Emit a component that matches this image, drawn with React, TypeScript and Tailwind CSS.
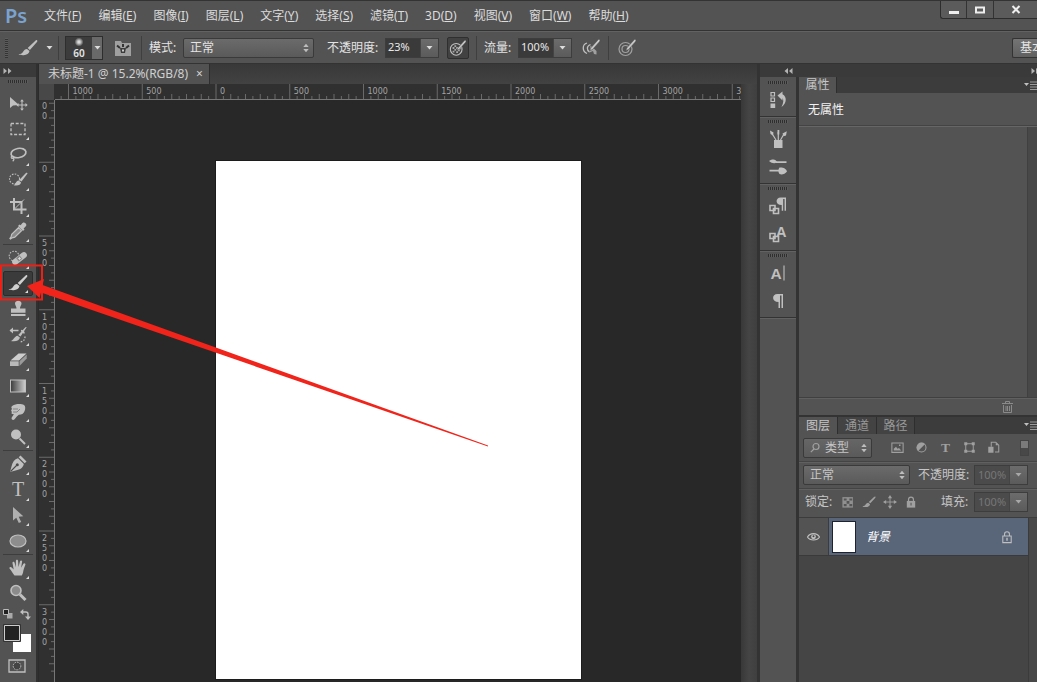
import React from "react";

type Glyph = { label: string; art: React.ReactNode; more?: boolean; active?: boolean };

const C = "#c0c0c0";
const D = "#a0a0a0";

function Svg({ children, size = 20 }: { children: React.ReactNode; size?: number }) {
  return (
    <svg width={size} height={size} viewBox="0 0 20 20" fill="none" aria-hidden="true" className="block shrink-0">
      {children}
    </svg>
  );
}

const brushPath = (color: string) => (
  <>
    <path d="M19 2.200c.8.7.3 1.500-.5 2.400l-6.600 7.300-2.200-1.800 7.400-7.200c.7-.6 1.400-1.100 1.900-.7z" fill={color} />
    <path d="M9 11l2.500 2.100c-.4 2.700-2.800 4-5.800 4.100-2 .1-4-.2-5.200-.9 2.700-.3 3.700-1.200 4.600-2.600.9-1.500 2.100-2.700 3.900-2.700z" fill={color} />
  </>
);

const groups: Glyph[][] = [
  [
    {
      label: "移动工具",
      art: (
        <>
          <path d="M2 3v11l3-2.500 6-.5z" fill={C} />
          <path d="M14 6.500v9M9.500 11h9" stroke={C} strokeWidth="1.100" />
          <path d="M14 5.300l1.900 2.200h-3.800zM14 16.700l-1.900-2.200h3.800zM8.300 11l2.200-1.900v3.800zM19.700 11l-2.200 1.900V9.100z" fill={C} />
        </>
      ),
    },
    { label: "矩形选框", more: true, art: <rect x="3" y="4.500" width="14" height="11" stroke={C} strokeWidth="1.300" strokeDasharray="3 1.700" /> },
    {
      label: "套索",
      more: true,
      art: (
        <>
          <ellipse cx="10.500" cy="8" rx="7.500" ry="4.600" transform="rotate(-10 10.500 8)" stroke={C} strokeWidth="1.700" />
          <path d="M4 11c-1.500 1-.6 2.700.8 2.100 1.300-.6.9-2.200-.5-1.800M5.500 13c.7 1.200.3 2.400-.8 3.200" stroke={C} strokeWidth="1.200" />
        </>
      ),
    },
    {
      label: "快速选择",
      more: true,
      art: (
        <>
          <circle cx="6.500" cy="9" r="5" stroke={C} strokeWidth="1.100" strokeDasharray="1.600 1.300" />
          <path d="M19.500 3.500l-6 8-2.300-1.600 6.500-6.600c.8-.8 2-.6 1.800.2z" fill={C} />
          <path d="M10.600 10.500l2.400 1.800c-.3 2.600-3 3.900-7.500 3 2.200-.6 2.300-4.400 5.100-4.800z" fill={C} />
        </>
      ),
    },
    {
      label: "裁剪",
      more: true,
      art: (
        <>
          <path d="M6 2v11.500h12.500M2 6h11.500v12" stroke={C} strokeWidth="2" />
          <path d="M6.500 13L16 3.500" stroke={C} strokeWidth="1" />
        </>
      ),
    },
    {
      label: "吸管",
      more: true,
      art: (
        <>
          <path d="M17.500 2.300c1.500 1.500.9 2.900-.6 3.900l-1.300 1.300.9.900-1.500 1.500-5-5L11.500 3.400l.9.900 1.300-1.300c1-1.500 2.300-2 3.800-.7z" fill={C} />
          <path d="M10.500 6.700l3 3-6.700 6.500-2.700.6-1.600 1.200-.6-.6 1.200-1.600.6-2.500z" fill="#8a8a8a" stroke={C} strokeWidth="1.200" />
        </>
      ),
    },
  ],
  [
    {
      label: "修复画笔",
      more: true,
      art: (
        <>
          <circle cx="6" cy="8" r="4.800" stroke={C} strokeWidth="1.100" strokeDasharray="1.600 1.300" />
          <rect x="3" y="7.500" width="17" height="6" rx="3" transform="rotate(-38 11.500 10.500)" fill={C} />
          <rect x="9" y="8" width="4.500" height="4.500" transform="rotate(-38 11.500 10.500)" fill="#8c8c8c" />
          <path d="M10 10.500h3M11.500 9v3" stroke="#ddd" strokeWidth=".8" />
        </>
      ),
    },
    { label: "画笔", more: true, active: true, art: brushPath("#cfcfcf") },
    {
      label: "仿制图章",
      more: true,
      art: (
        <path d="M7 4.500C7 .8 13.500.8 13.500 4.500c0 2-1.700 3-1.500 5h5.500v4.300H3V9.500h5.500c.2-2-1.500-3-1.500-5zM3 15h14.500v2H3z" fill={C} />
      ),
    },
    {
      label: "历史记录画笔",
      more: true,
      art: (
        <>
          <path d="M2.500 5.500h8M13 5.500c2 .3 3 1.500 3 3" stroke={C} strokeWidth="1.500" />
          <path d="M5 2.500v6L1.500 5.500z" fill={C} />
          <path d="M18.500 2.500l-6 9-2.300-1.600 6.500-7c.8-.8 2-1.200 1.800-.4z" fill={C} />
          <path d="M9.500 10.700l2.400 1.800c-.3 3-4 4.600-9.300 3.500 3-.5 3.800-4.900 6.900-5.300z" fill={C} />
          <path d="M17 11.500c0 3-1.500 5-4.500 5.500" stroke={C} strokeWidth="1.300" strokeDasharray="1.500 1.500" />
        </>
      ),
    },
    {
      label: "橡皮擦",
      more: true,
      art: (
        <>
          <path d="M10.500 3.500h8L11 10.500H2.500z" fill="#cdcdcd" />
          <path d="M2 11.300h8.700V16H2z" fill="#b9b9b9" />
          <path d="M11.500 11.300l7.200-6.700v4L11.500 16z" fill="#9a9a9a" />
        </>
      ),
    },
    {
      label: "渐变",
      more: true,
      art: (
        <>
          <defs>
            <linearGradient id="tool-gradient">
              <stop offset="0" stopColor="#3a3a3a" />
              <stop offset="1" stopColor="#d0d0d0" />
            </linearGradient>
          </defs>
          <rect x="2.500" y="4" width="15" height="12" fill="url(#tool-gradient)" stroke={C} />
        </>
      ),
    },
    {
      label: "涂抹",
      more: true,
      art: (
        <>
          <path d="M4.500 3.800C7 2 13 1.500 16 3c1.500 1 1.600 3.500.6 6-1 2.800-3 3.800-5.800 3.800-1.500 1-3 3-4.500 4.700-1.300 1.200-3.400-.3-2.600-2l2.200-3.200c-2.500 0-3.200-1-1.800-2.200C2.700 9 3 7.500 4.300 7c-1.300-1-1.300-2.400.2-3.200z" fill={C} />
          <path d="M5 7h5M5 10h4l3-3" stroke="#7d7d7d" strokeWidth=".9" />
        </>
      ),
    },
    {
      label: "减淡",
      more: true,
      art: (
        <>
          <circle cx="8" cy="7.500" r="5" fill={C} />
          <path d="M11.500 11.500l5.500 5.500" stroke={C} strokeWidth="2" />
        </>
      ),
    },
  ],
  [
    {
      label: "钢笔",
      more: true,
      art: (
        <>
          <path d="M12.500 1.500l6 6-1.800 1.800-6-6z" fill={C} />
          <path d="M10 4.200l5.800 5.800c-.7 3.500-3 5.500-8.300 6.500L2 18l1.500-5.500C4.500 7.800 6.500 5.200 10 4.200z" fill={C} />
          <path d="M2.500 17.500l6-6" stroke="#4a4a4a" strokeWidth="1.100" />
          <circle cx="9.300" cy="10.700" r="1.500" fill="#4a4a4a" />
        </>
      ),
    },
    {
      label: "文字",
      more: true,
      art: (
        <text x="10" y="16" textAnchor="middle" fill={C} fontFamily="'Liberation Serif', serif" fontSize="20">
          T
        </text>
      ),
    },
    { label: "路径选择", more: true, art: <path d="M5 2v13.500l3.300-2.800 2.500 5.300 2.400-1.100-2.500-5.200 4.600-.5z" fill="#b0b0b0" /> },
    { label: "椭圆", more: true, art: <ellipse cx="10" cy="10" rx="8" ry="6" fill="#8d8d8d" stroke={C} strokeWidth="1.200" /> },
  ],
  [
    {
      label: "抓手",
      more: true,
      art: (
        <path d="M6.500 17.500C5 15.500 3.500 13 1.500 10.500 1 9 2.700 8.300 3.700 9.500l2 2L4.500 5.200c-.2-1.500 1.700-1.900 2.100-.4l1.200 4.400L7.900 3c0-1.600 2.100-1.600 2.200 0l.4 6L12 3.300c.4-1.500 2.400-1 2.100.5l-1 6 2.300-4c.8-1.200 2.500-.3 1.900 1.100-1 2.600-1.600 4-2 6.100-.2 2-.8 3.300-1.500 4.500z" fill={C} />
      ),
    },
    {
      label: "缩放",
      art: (
        <>
          <circle cx="8" cy="7.500" r="5" fill="#8b8b8b" stroke={C} strokeWidth="1.600" />
          <path d="M12 11.500l5.500 5.500" stroke={C} strokeWidth="3" />
        </>
      ),
    },
  ],
];

const groupHeights = ["h-[154px] border-b", "h-[206px] border-b", "h-[104px] border-b", "h-[51px]"];

const menus: [string, string][] = [
  ["文件", "F"], ["编辑", "E"], ["图像", "I"], ["图层", "L"], ["文字", "Y"], ["选择", "S"],
  ["滤镜", "T"], ["3D", "D"], ["视图", "V"], ["窗口", "W"], ["帮助", "H"],
];

const Grip = () => <div className="mx-auto h-[3px] w-5 bg-[repeating-linear-gradient(90deg,#2e2e2e_0_1px,#5c5c5c_1px_2px)]" />;
const Sep = ({ className }: { className: string }) => <div className={`h-6 w-px bg-[#3f3f3f] ${className}`} />;
const Caret = ({ dim }: { dim?: boolean }) => (
  <svg width="7" height="4" viewBox="0 0 7 4" aria-hidden="true"><path d="M.5 0h6l-3 3.500z" fill={dim ? "#a8a8a8" : "#dcdcdc"} /></svg>
);
const UpDown = () => (
  <svg width="6" height="9" viewBox="0 0 6 9" className="pointer-events-none absolute top-1/2 right-1 -translate-y-1/2" aria-hidden="true">
    <path d="M.3 3.500L3 .3l2.700 3.200zM.3 5.500L3 8.700l2.700-3.200z" fill="#bdbdbd" />
  </svg>
);
const Chevrons = ({ left }: { left?: boolean }) => (
  <svg width="9" height="6" viewBox="0 0 9 6" aria-hidden="true">
    <path d={left ? "M4 0v6L.5 3zM8.500 0v6L5 3z" : "M.5 0v6L4 3zM5 0v6l3.500-3z"} fill="#b4b4b4" />
  </svg>
);
const PanelMenu = () => (
  <button aria-label="面板菜单" className="ml-auto flex h-full shrink-0 items-center">
    <svg width="13" height="9" viewBox="0 0 13 9"><path d="M0 2h5L2.500 5z" fill={C} /><path d="M6 1h7M6 3.500h7M6 6h7M6 8.500h7" stroke="#9c9c9c" strokeWidth="1" /></svg>
  </button>
);

function Choice({ label, value, className }: { label: string; value: string; className: string }) {
  return (
    <div className={`relative rounded-[2px] border border-[#3a3a3a] bg-gradient-to-b from-[#6b6b6b] to-[#5a5a5a] ${className}`}>
      <select aria-label={label} className="block h-[18px] w-full appearance-none bg-transparent pr-3 pl-[6px] text-xs leading-[18px] outline-none">
        <option>{value}</option>
      </select>
      <UpDown />
    </div>
  );
}

function Percent({ id, value, dim }: { id: string; value: string; dim?: boolean }) {
  return (
    <div className="flex h-5 w-[54px] shrink-0 border border-[#3d3d3d]">
      <input
        id={id}
        defaultValue={value}
        className={
          dim
            ? "w-[34px] bg-[#4b4b4b] pl-[3px] text-[11px] text-[#777] outline-none"
            : "w-[34px] bg-[#3a3a3a] pl-[2px] text-[11px] text-[#e8e8e8] outline-none"
        }
      />
      <button aria-label="展开" className="flex flex-1 items-center justify-center border-l border-[#444] bg-gradient-to-b from-[#6c6c6c] to-[#5b5b5b]">
        <Caret dim={dim} />
      </button>
    </div>
  );
}

const penArt = <path d="M18.500 1.500c1 1 .3 1.900-.5 2.800l-6.500 7.200-2.700 1.200 1-2.800 6.700-7.400c.7-.8 1.300-1.500 2-1z" fill="#c8c8c8" stroke="#505050" strokeWidth=".6" />;

function OptionsBar() {
  return (
    <div className="flex h-8 shrink-0 items-center border-t border-[#626262] text-xs whitespace-nowrap text-[#e4e4e4]">
      <div className="ml-[5px] h-5 w-[3px] bg-[repeating-linear-gradient(0deg,#343434_0_1px,#5c5c5c_1px_2px)]" />
      <button aria-label="工具预设" className="ml-[10px] flex items-center gap-2"><Svg>{brushPath(C)}</Svg><Caret /></button>
      <Sep className="ml-[5px]" />
      <button aria-label="画笔大小" className="ml-[6px] flex h-6 w-[38px] border border-[#2e2e2e] bg-[#3c3c3c]">
        <span className="flex flex-1 flex-col items-center">
          <svg width="10" height="10" viewBox="0 0 10 10"><defs><radialGradient id="soft-tip"><stop offset="0" stopColor="#eee" /><stop offset=".4" stopColor="#bbb" /><stop offset="1" stopColor="#3c3c3c" /></radialGradient></defs><circle cx="5" cy="5" r="4.500" fill="url(#soft-tip)" /></svg>
          <span className="text-[10px] leading-3 font-semibold">60</span>
        </span>
        <span className="flex h-full w-[10px] items-center justify-center bg-[#696969]"><Caret /></span>
      </button>
      <button aria-label="画笔面板" className="ml-[10px]">
        <Svg>
          <path d="M2 3h6l1 2h9v13H2z" fill={D} />
          <path d="M4 7.500l3 2.500M16 7.500l-3 2.500M10 6v3" stroke="#333" strokeWidth="2" />
          <path d="M7 10h6l-1 5H8z" fill="#3c3c3c" /><path d="M9 11.500h2v2H9z" fill="#ccc" />
        </Svg>
      </button>
      <Sep className="ml-2" />
      <span className="ml-[7px] w-7">模式:</span>
      <Choice label="模式" value="正常" className="ml-[6px] w-[131px]" />
      <label htmlFor="opacity" className="ml-[13px] w-[52px]">不透明度:</label>
      <div className="ml-[6px]"><Percent id="opacity" value="23%" /></div>
      <button aria-label="不透明度压力" className="ml-2 flex h-[22px] w-[22px] items-center justify-center rounded-[2px] border border-[#2f2f2f] bg-[#424242]">
        <Svg size={18}>
          <circle cx="8" cy="11.500" r="6.500" stroke={C} strokeWidth="1.200" />
          <path d="M4 9h2v2H4zM8 9h2v2H8zM6 11h2v2H6zM10 11.500h2v2h-2zM4 13h2v2H4zM8 13.500h2v2H8zM6 7h2v2H6zM12 9.500h1.500v2H12z" fill="#a8a8a8" />
          {penArt}
        </Svg>
      </button>
      <Sep className="ml-[7px]" />
      <label htmlFor="flow" className="ml-[7px] w-7">流量:</label>
      <div className="ml-[6px]"><Percent id="flow" value="100%" /></div>
      <button aria-label="喷枪" className="ml-[9px]">
        <Svg>
          <path d="M6 5C1 6.500 1 13.500 6 15.500M9.500 6.500C5.500 8 5.500 12 8.500 14" stroke={C} strokeWidth="1.300" />
          <path d="M9.500 7.500l6 5.500v3.500l-2.500-.5-1-3-3.500 1.500z" fill={D} />
          {penArt}
        </Svg>
      </button>
      <Sep className="ml-[7px]" />
      <button aria-label="大小压力" className="ml-2">
        <Svg>
          <circle cx="8.500" cy="11" r="6.500" stroke={D} strokeWidth="1.200" />
          <circle cx="8.500" cy="11" r="3.500" stroke={D} strokeWidth="1.200" />
          {penArt}
        </Svg>
      </button>
      <button className="ml-auto h-5 w-[25px] overflow-hidden rounded-l-[2px] border border-r-0 border-[#333] bg-gradient-to-b from-[#747474] to-[#606060] pl-[7px] text-left">基本</button>
    </div>
  );
}

function Toolbar() {
  return (
    <aside className="flex w-[38px] shrink-0 flex-col border-r-2 border-[#303030]">
      <div className="flex h-[13px] shrink-0 items-center bg-[#3a3a3a] pl-[3px]"><Chevrons /></div>
      <div className="h-[14px] shrink-0 pt-[3px]"><Grip /></div>
      {groups.map((g, i) => (
        <div key={i} className={`mx-[3px] grid shrink-0 auto-rows-fr border-[#3d3d3d] ${groupHeights[i]}`}>
          {g.map((t) => (
            <button
              key={t.label}
              aria-label={t.label}
              className={"relative flex items-center justify-center " + (t.active ? "rounded-[2px] border border-[#2c2c2c] bg-[#3b3b3b]" : "")}
            >
              <Svg>{t.art}</Svg>
              {t.more && (
                <svg width="3" height="3" viewBox="0 0 3 3" className="absolute right-[4px] bottom-[2px]" aria-hidden="true"><path d="M3 0v3H0z" fill="#ddd" /></svg>
              )}
            </button>
          ))}
        </div>
      ))}
      <div className="flex h-4 shrink-0 items-center justify-between pr-[5px] pl-[3px]">
        <svg width="10" height="10" viewBox="0 0 10 10"><path d="M4 4h5.500v5.500H4z" fill="#aaa" /><path d="M.5.5h5v5h-5z" fill="#222" stroke="#bbb" /></svg>
        <svg width="11" height="11" viewBox="0 0 11 11"><path d="M2.500 3h3.300c1.500 0 2.200.8 2.200 2v3" fill="none" stroke={C} strokeWidth="1.400" /><path d="M0 3l3.300-3v6zM8 11L5 7.500h6z" fill={C} /></svg>
      </div>
      <svg width="36" height="33" viewBox="0 0 36 33" className="block shrink-0">
        <path d="M13 12h18v18H13z" fill="#fff" />
        <path d="M3.500 2.500h17v17h-17z" fill="#555" stroke="#333" />
        <path d="M4.500 3.500h15v15h-15z" fill="#222" stroke="#ccc" />
      </svg>
      <button aria-label="快速蒙版" className="mt-1 ml-2">
        <svg width="18" height="14" viewBox="0 0 18 14"><path d="M1 1h16v12H1z" fill="none" stroke={C} strokeWidth="1.300" /><circle cx="9" cy="7" r="3.800" fill="#444" stroke={C} strokeDasharray="1.500 1" /></svg>
      </button>
    </aside>
  );
}

const STEP = 73.75;

function Ruler({ vertical }: { vertical?: boolean }) {
  const first = vertical ? -11.500 : 29.500;
  const labels = vertical ? ["500", "0", "500", "1000", "1500", "2000", "2500", "3000"] : ["1000", "500", "0", "500", "1000", "1500", "2000", "2500", "3000", "3500"];
  const minors = Array.from({ length: labels.length * 10 + 4 }, (_, i) => i - 4);
  const at = (k: number) => first + k * STEP;
  return (
    <svg
      className={vertical ? "block h-full w-4 shrink-0 bg-[#303030]" : "block h-4 w-full shrink-0 bg-[#303030]"}
      fontFamily="'DejaVu Sans', sans-serif"
      fontSize="8"
      fill="#a4a4a4"
      aria-hidden="true"
    >
      {vertical ? <path d="M15.500 0v1200" stroke="#777" /> : <path d="M16 15.500h2000" stroke="#777" />}
      {minors.map((m) => {
        const p = at(m / 10);
        if (!vertical && p < 16) return null;
        const len = m % 10 === 0 ? 15 : m % 2 === 0 ? 5 : 3;
        return <path key={m} stroke="#6a6a6a" d={vertical ? `M${15 - len} ${p}h${len}` : `M${p} ${15 - len}v${len}`} />;
      })}
      {labels.map((l, k) =>
        vertical
          ? l.split("").map((ch, j) => {
              const y = at(k) + 10 + j * 10;
              return y < 8 ? null : <text key={`${k}-${j}`} x="3" y={y}>{ch}</text>;
            })
          : <text key={k} x={at(k) + 4} y="10">{l}</text>
      )}
      {!vertical && <path d="M0 0h15v16H0z" fill="#484848" />}
    </svg>
  );
}

function DocumentArea() {
  return (
    <main className="flex min-w-0 flex-1 flex-col border-l border-[#2b2b2b]">
      <div className="flex h-5 shrink-0 bg-gradient-to-b from-[#383838] to-[#424242]">
        <div className="flex items-center gap-2 border-r border-[#2e2e2e] bg-[#525252] pr-[6px] pl-[9px] text-xs whitespace-nowrap text-[#d0d0d0]">
          <span>未标题-1 @ 15.2%(RGB/8)</span>
          <button aria-label="关闭" className="text-xs leading-none">×</button>
        </div>
      </div>
      <div className="flex min-h-0 flex-1">
        <div className="flex min-w-0 flex-1 flex-col overflow-hidden">
          <Ruler />
          <div className="flex min-h-0 flex-1">
            <Ruler vertical />
            <div className="min-w-0 flex-1 overflow-hidden bg-[#282828]">
              <div className="mt-[61px] ml-[161px] h-[518px] w-[365px] bg-white shadow-[0_0_0_1px_#1c1c1c]" />
            </div>
          </div>
        </div>
        <div className="w-4 shrink-0 bg-gradient-to-r from-[#383838] via-[#454545] to-[#3f3f3f]" />
      </div>
    </main>
  );
}

const Para = ({ x, y, s }: { x: number; y: number; s: number }) => (
  <path transform={`translate(${x} ${y}) scale(${s})`} d="M10 0v14H8.500V1.500H7V14H5.500V8C-1.500 8-1.500 0 4.500 0z" fill={C} />
);
const Steps = () => (
  <path d="M2 9.500h5v5H2zM5.500 12.500h5v5h-5z" stroke={C} strokeWidth="1.600" />
);
const Letter = ({ x, y, s }: { x: number; y: number; s: number }) => (
  <text x={x} y={y} fontSize={s} fill={C} fontFamily="'Liberation Sans', sans-serif" fontWeight="700">A</text>
);

const dock: Glyph[][] = [
  [{ label: "历史记录", art: <><path d="M3 2.500h3.500V6H3zM3 8h3.500v3.500H3z" stroke={C} strokeWidth="1.200" /><path d="M2.500 13.500h4.700V18H2.500z" fill={C} /><path d="M9.500 5.500l5-4v2.700c4.500 2.300 4.500 9-1 12.800 2.200-4.300 2.200-7.200 1-9v2.500z" fill={C} /></> }],
  [
    { label: "画笔预设", art: <><path d="M6 11h8.500v8H6z" fill={C} /><path d="M8 11L4 4.500M10.300 11V3M12.500 11l3.500-6" stroke={C} strokeWidth="1.200" /><path d="M2 1.500l3.500 2L5 6.500 2.500 5zM9.500 1h1.800v4.500H9.500zM14.500 4.500l4.300-2.300-.8 4.300-2.500.8z" fill={C} /></> },
    { label: "画笔", art: <><path d="M1 4c4-2.500 7-1.500 8 1-2 2-5 1.500-8-1zM11.500 10.500c3-.5 7 1 7.500 4-2 2.500-5 3.500-7.500 2.500-1.500-2-1.500-4.500 0-6.500z" fill={C} /><path d="M8 5.200h10.500M1.500 13.700h11" stroke={C} strokeWidth="1.700" /></> },
  ],
  [
    { label: "段落样式", art: <><Steps /><Para x={8.500} y={1.500} s={0.95} /></> },
    { label: "字符样式", art: <><Steps /><Letter x={8} y={12.500} s={14.500} /></> },
  ],
  [
    { label: "字符", art: <><Letter x={2.500} y={15.500} s={15.500} /><path d="M16 2.500v15" stroke={C} strokeWidth="1.100" /></> },
    { label: "段落", art: <Para x={5} y={3} s={1} /> },
  ],
];

function Dock() {
  return (
    <nav className="w-9 shrink-0 pt-px">
      {dock.map((g, i) => (
        <div key={i} className="border-b border-[#333] pt-[3px] pb-[2px] shadow-[0_1px_0_#626262]">
          <Grip />
          <div className="pt-[2px]">
            {g.map((t) => (
              <button key={t.label} aria-label={t.label} className="flex h-7 w-full items-center justify-center"><Svg>{t.art}</Svg></button>
            ))}
          </div>
        </div>
      ))}
    </nav>
  );
}

const filters: Glyph[] = [
  { label: "像素", art: <><path d="M2.500 4h15v12.500h-15z" stroke={D} strokeWidth="1.400" /><path d="M5 14v-2.500L8 9l2 2.500 2-1 3 3.500zM12 6h2v2h-2z" fill={D} /></> },
  { label: "调整", art: <><circle cx="10" cy="10" r="6" stroke={D} strokeWidth="1.400" /><path d="M14.500 5.500a6.300 6.300 0 0 0-9 9z" fill={D} /></> },
  { label: "文字", art: <text x="10" y="16" textAnchor="middle" fill={D} fontFamily="'Liberation Serif', serif" fontSize="18" fontWeight="700">T</text> },
  { label: "形状", art: <><path d="M5 5h10v10H5z" stroke={D} strokeWidth="1.300" /><path d="M3 3h4v4H3zM13 3h4v4h-4zM3 13h4v4H3zM13 13h4v4h-4z" fill={D} /></> },
  { label: "智能对象", art: <><path d="M7 9V3h6l4 4v9h-5" stroke={D} strokeWidth="1.400" /><path d="M3 9h7v8H3zM13 3v4h4z" fill={D} /></> },
];
const lockArt = <><path d="M6.500 9V6.500c0-4.500 7-4.500 7 0V9" stroke={D} strokeWidth="1.700" /><path d="M4 8.500h12V18H4z" fill={D} /><path d="M9.300 11h1.500v4H9.300z" fill="#555" /></>;
const locks: Glyph[] = [
  { label: "锁定透明像素", art: <><path d="M2 3h15v15H2z" fill="#909090" /><path d="M4 5h4v3H4zM12 5h4v3h-4zM8 8.500h4v4H8zM4 13h4v3H4zM12 13h4v3h-4z" fill="#555" /></> },
  { label: "锁定图像像素", art: brushPath(D) },
  { label: "锁定位置", art: <><path d="M10 3v14M3 10h14" stroke={D} strokeWidth="1.300" /><path d="M10 0l3 4.500H7zM10 20l-3-4.500h6zM0 10l4.500-3v6zM20 10l-4.500 3V7z" fill={D} /></> },
  { label: "锁定全部", art: lockArt },
];

function Panels() {
  return (
    <aside className="flex min-w-0 flex-1 flex-col text-xs text-[#c6c6c6]">
      <div className="flex h-4 shrink-0 bg-[#3c3c3c]">
        <button className="w-[38px] border-r border-[#2e2e2e] bg-[#535353] leading-4">属性</button>
        <PanelMenu />
      </div>
      <div className="h-[33px] shrink-0 border-b border-[#444] pl-[9px] leading-[34px] text-[#f2f2f2] shadow-[0_1px_0_#666]">无属性</div>
      <div className="mt-px flex h-[270px] shrink-0">
        <div className="flex-1" />
        <div className="w-[10px] border-l border-[#404040] bg-[#484848]" />
      </div>
      <div className="flex h-[18px] shrink-0 items-center justify-end border-t border-[#404040] pr-6 shadow-[inset_0_1px_0_#606060]">
        <button aria-label="删除">
          <svg width="11" height="12" viewBox="0 0 11 12" fill="none" stroke="#8a8a8a"><path d="M0 2.500h11M3.500 2V.5h4V2M1.500 4v7.500h8V4M4 5v5M5.500 5v5M7.500 5v5" /></svg>
        </button>
      </div>
      <div className="flex h-[19px] shrink-0 border-t-2 border-[#333] bg-[#3c3c3c]" role="tablist">
        <button role="tab" aria-selected="true" className="w-[39px] border-r border-[#2e2e2e] bg-[#535353] leading-4">图层</button>
        <button role="tab" aria-selected="false" className="w-[39px] border-r border-[#2e2e2e] bg-[#434343] leading-4 text-[#999]">通道</button>
        <button role="tab" aria-selected="false" className="w-[38px] border-r border-[#2e2e2e] bg-[#434343] leading-4 text-[#999]">路径</button>
        <PanelMenu />
      </div>
      <div className="flex h-7 shrink-0 items-center border-b border-[#444] pl-1 shadow-[0_1px_0_#606060]">
        <div className="relative flex w-[69px] items-center rounded-[2px] border border-[#3a3a3a] bg-gradient-to-b from-[#666] to-[#5a5a5a] pl-[6px]">
          <svg width="10" height="11" viewBox="0 0 10 11" fill="none" stroke={D} strokeWidth="1.200" className="shrink-0"><circle cx="6" cy="4.500" r="3" /><path d="M4 7L.8 10.200" /></svg>
          <select aria-label="类型" className="h-[18px] w-full appearance-none bg-transparent pl-[5px] text-xs leading-[18px] outline-none"><option>类型</option></select>
          <UpDown />
        </div>
        <div className="ml-[18px] flex gap-[9px]">
          {filters.map((t) => <button key={t.label} aria-label={t.label} className="flex h-[15px] w-[15px] items-center justify-center"><Svg size={15}>{t.art}</Svg></button>)}
        </div>
        <button aria-label="滤镜开关" className="mr-2 ml-auto h-4 w-[9px] border border-[#444] bg-gradient-to-b from-[#7a7a7a] from-50% to-[#484848] to-50%" />
      </div>
      <div className="flex h-[27px] shrink-0 items-center border-b border-[#444] pl-1 shadow-[0_1px_0_#606060]">
        <Choice label="混合模式" value="正常" className="w-[107px]" />
        <label htmlFor="layer-opacity" className="ml-2 w-[50px] whitespace-nowrap">不透明度:</label>
        <div className="ml-[6px]"><Percent id="layer-opacity" value="100%" dim /></div>
      </div>
      <div className="flex h-7 shrink-0 items-center pb-[2px] pl-[6px] whitespace-nowrap">
        <span className="w-7">锁定:</span>
        <div className="ml-2 flex gap-[7px]">
          {locks.map((t) => <button key={t.label} aria-label={t.label}><Svg size={14}>{t.art}</Svg></button>)}
        </div>
        <label htmlFor="fill" className="ml-[23px] w-7">填充:</label>
        <div className="ml-[5px]"><Percent id="fill" value="100%" dim /></div>
      </div>
      <div className="flex flex-1 border-t border-[#3c3c3c]">
        <div className="flex-1 bg-[#454545]">
          <div className="flex h-[38px] border-b border-[#3a3a3a] bg-[#535353]">
            <button aria-label="可见性" className="flex w-[30px] items-center justify-center border-r border-[#3c3c3c]">
              <svg width="13" height="9" viewBox="0 0 13 9"><path d="M.5 5C3 .5 10 .5 12.500 5 10 9 3 9 .5 5z" fill="none" stroke={C} strokeWidth="1.200" /><circle cx="6.500" cy="4.800" r="2.400" fill={C} /><circle cx="6.500" cy="4.300" r="1" fill="#444" /></svg>
            </button>
            <div className="flex flex-1 items-center bg-[#596578] pr-[14px] pl-[3px]">
              <div className="h-8 w-6 border border-[#1d2430] bg-white" />
              <span className="ml-[10px] text-white italic">背景</span>
              <span className="ml-auto">
                <svg width="14" height="14" viewBox="0 0 20 20" fill="none"><path d="M6.500 9V6c0-4.500 7-4.500 7 0v3M4 8.500h12V18H4z" stroke={C} strokeWidth="1.500" /><path d="M10 11v4.500" stroke={C} strokeWidth="2" /></svg>
              </span>
            </div>
          </div>
        </div>
        <div className="w-[9px] border-l border-[#3b3b3b] bg-[#484848]" />
      </div>
    </aside>
  );
}

export default function App() {
  return (
    <div className="relative flex h-screen flex-col overflow-hidden border-t border-[#333] bg-[#535353] font-['Noto_Sans','Noto_Sans_CJK_SC',sans-serif]">
      <header className="flex h-[30px] shrink-0 items-center border-b border-[#333] pl-[5px]">
        <span className="w-[39px] text-[20px] leading-7 font-semibold text-[#7ba3cf]">Ps</span>
        <nav className="flex gap-[17px] text-xs whitespace-nowrap text-[#dcdcdc]">
          {menus.map(([name, key]) => (
            <button key={name}>{name}(<u>{key}</u>)</button>
          ))}
        </nav>
        <div className="ml-auto flex h-[18px] self-start rounded-bl-[3px] border-b border-l border-[#2d2d2d] bg-[#5b5b5b]">
          <button aria-label="最小化" className="flex w-[26px] items-center justify-center border-r border-[#333]"><svg width="10" height="10"><path d="M0 6h10v3H0z" fill="#eee" /></svg></button>
          <button aria-label="最大化" className="flex w-[27px] items-center justify-center border-r border-[#333]"><svg width="10" height="8"><path d="M1 1.500h8v5H1z" fill="none" stroke="#eee" strokeWidth="2" /></svg></button>
          <button aria-label="关闭" className="flex w-[43px] items-center justify-center"><svg width="10" height="9"><path d="M1.500 1l7 7M8.500 1l-7 7" stroke="#eee" strokeWidth="2" /></svg></button>
        </div>
      </header>
      <OptionsBar />
      <div className="flex min-h-0 flex-1 border-t border-[#333]">
        <Toolbar />
        <DocumentArea />
        <div className="flex w-[280px] shrink-0 flex-col border-l-[3px] border-[#333]">
          <div className="flex h-[13px] shrink-0 items-center justify-between bg-[#3a3a3a]">
            <span className="pl-6"><Chevrons left /></span>
            <span className="w-[6px] overflow-hidden"><Chevrons /></span>
          </div>
          <div className="flex min-h-0 flex-1">
            <Dock />
            <div className="w-[3px] shrink-0 bg-[#333]" />
            <Panels />
          </div>
        </div>
      </div>
      <svg width="500" height="460" viewBox="0 0 500 460" className="pointer-events-none absolute -top-px left-0" aria-hidden="true">
        <path d="M1 265.500h41v34H1z" fill="none" stroke="#ee2015" strokeWidth="2" />
        <path d="M27 286l17-7-1.500 6L488 445.500v1L41 292.500l-1.500 5.500z" fill="#f0241a" />
      </svg>
    </div>
  );
}
